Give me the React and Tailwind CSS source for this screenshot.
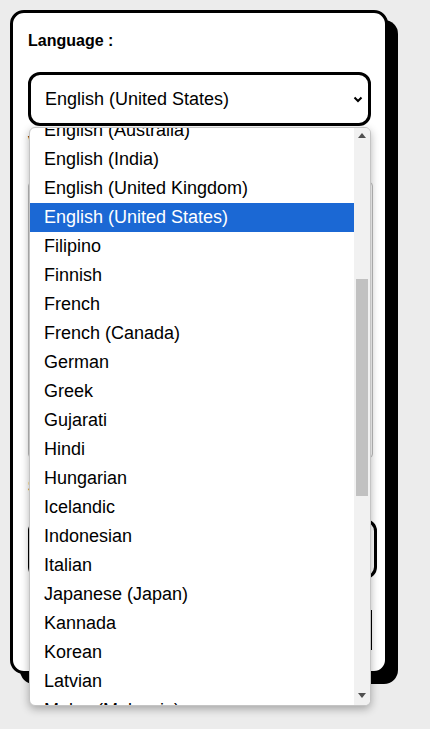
import React from 'react';

const options = [
  'English (Australia)',
  'English (India)',
  'English (United Kingdom)',
  'English (United States)',
  'Filipino',
  'Finnish',
  'French',
  'French (Canada)',
  'German',
  'Greek',
  'Gujarati',
  'Hindi',
  'Hungarian',
  'Icelandic',
  'Indonesian',
  'Italian',
  'Japanese (Japan)',
  'Kannada',
  'Korean',
  'Latvian',
  'Malay (Malaysia)',
];

const selected = 'English (United States)';

const Dropdown = () => (
  <div className="absolute left-[1px] top-[55px] z-10 flex h-[579px] w-[342px] overflow-hidden rounded-[6px] border border-[#c4c4c4] bg-white shadow-[0_3px_8px_rgba(0,0,0,0.3)]">
    <div className="flex-1 overflow-hidden">
      <ul className="-mt-[12px]">
        {options.map((o) => (
          <li
            key={o}
            className={
              'flex h-[29px] items-center pl-[14px] text-[18px] ' +
              (o === selected ? 'bg-[#1b68d4] text-white' : 'text-black')
            }
          >
            {o}
          </li>
        ))}
      </ul>
    </div>
    <div className="relative w-[16px] bg-[#f1f1f1]">
      <div className="absolute left-[4px] top-[5px] h-0 w-0 border-x-[4px] border-b-[5px] border-x-transparent border-b-[#505050]" />
      <div className="absolute left-[2px] top-[151px] h-[217px] w-[12px] bg-[#c1c1c1]" />
      <div className="absolute bottom-[7px] left-[4px] h-0 w-0 border-x-[4px] border-t-[5px] border-x-transparent border-t-[#505050]" />
    </div>
  </div>
);

export default function App() {
  return (
    <div className="min-h-[729px] bg-[#ececec] p-[10px] font-['Liberation_Sans',Arial,sans-serif]">
      <div className="w-[378px] rounded-[14px] border-[3px] border-black bg-white px-[15px] pb-[21px] pt-[19px] shadow-[10px_10px_0_#000]">
        <div className="text-[16px] font-bold leading-[18px] text-black">Language :</div>
        <div className="relative mt-[22px]">
          <div className="flex h-[54px] w-[343px] items-center justify-between rounded-[12px] border-[3px] border-black px-[14px] text-[18px] text-black">
            <span>{selected}</span>
            <svg width="10" height="7" viewBox="0 0 10 7" className="-mr-[9px]">
              <path d="M1.5 1.5 L5 5 L8.5 1.5" fill="none" stroke="#000" strokeWidth="2" />
            </svg>
          </div>
          <Dropdown />
        </div>
        <div className="mt-[8px] text-[16px] font-bold leading-[18px] text-black">Voice :</div>
        <div className="mt-[30px] h-[276px] w-[345px] rounded-[4px] border border-[#bdbdbd]" />
        <div className="mt-[20px] text-[16px] font-bold leading-[18px] text-black">Speed :</div>
        <div className="mt-[23px] h-[60px] w-[349px] rounded-[12px] border-[3px] border-black" />
        <div className="mt-[31px] h-[40px] w-[344px] border-r-[3px] border-black" />
      </div>
    </div>
  );
}
